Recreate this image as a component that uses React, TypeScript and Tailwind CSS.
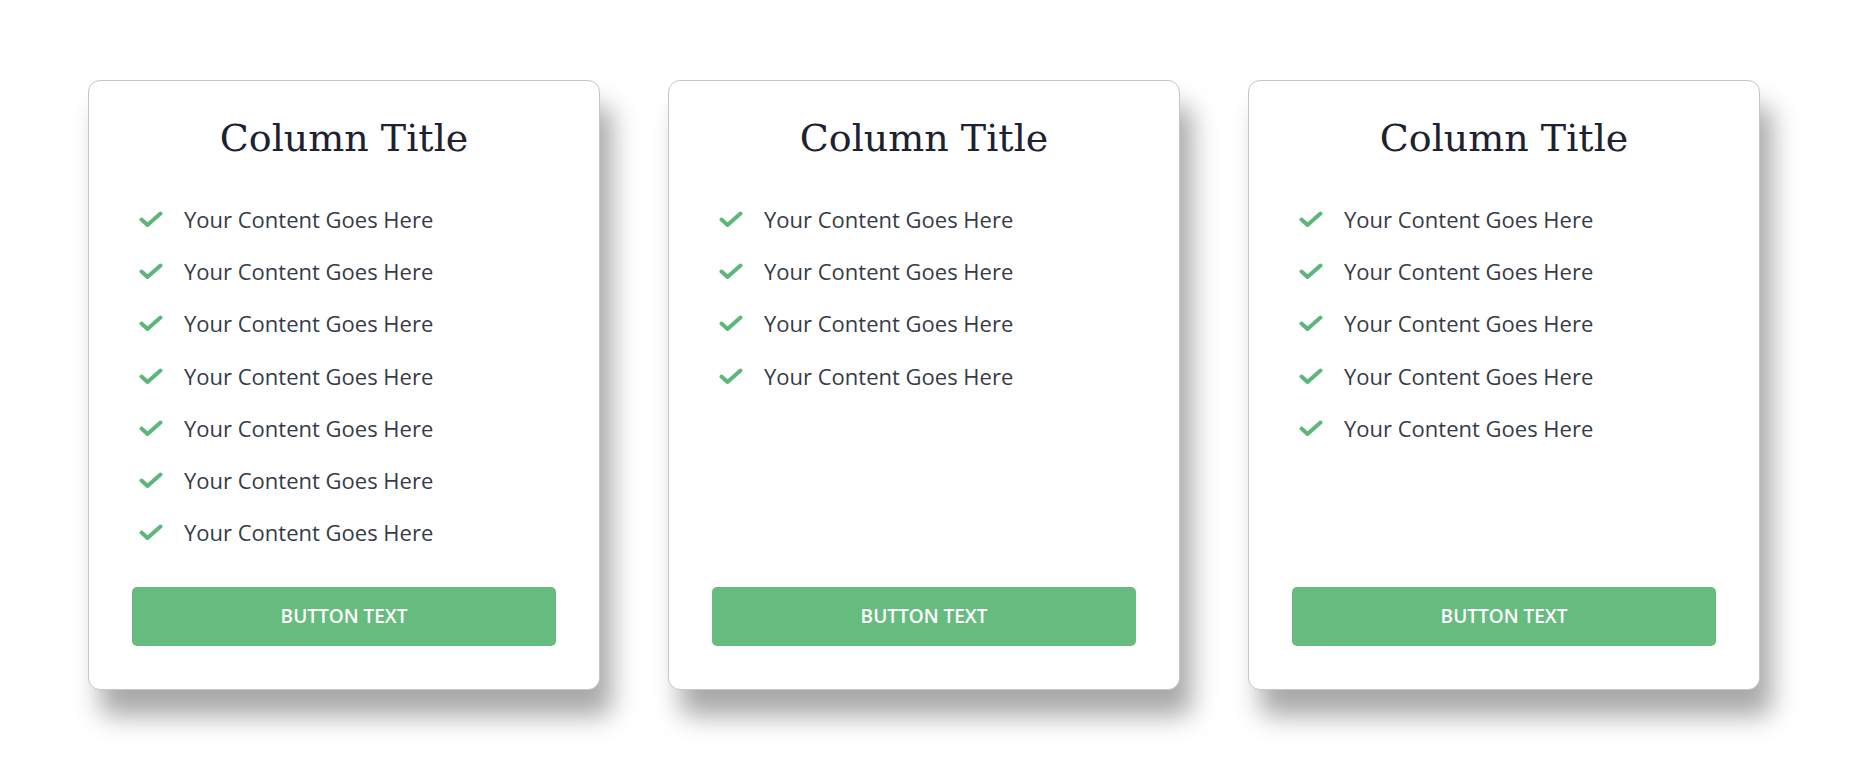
import React from "react";

const columns = [
  { title: "Column Title", items: 7 },
  { title: "Column Title", items: 4 },
  { title: "Column Title", items: 5 },
];

function CheckMark() {
  return (
    <svg viewBox="0 0 24 17" className="h-[17px] w-[24px] shrink-0" fill="none">
      <polyline
        points="2.5,8.5 8.5,14 21.5,2.5"
        stroke="#5db77a"
        strokeWidth="4"
        strokeLinecap="round"
        strokeLinejoin="round"
      />
    </svg>
  );
}

function PricingColumn({ title, items }: { title: string; items: number }) {
  return (
    <div className="flex w-[512px] flex-col rounded-[12px] border border-[#c6c6c6] bg-white px-[43px] pt-[29px] pb-[43px] shadow-[12px_26px_26px_rgba(0,0,0,0.34)]">
      <h2 className="text-center font-['DejaVu_Serif',serif] text-[38px] leading-[56px] text-[#1d2230]">
        {title}
      </h2>
      <ul className="mt-[27px] flex flex-1 flex-col pl-[7px]">
        {Array.from({ length: items }).map((_, i) => (
          <li key={i} className="flex h-[52.3px] items-center">
            <CheckMark />
            <span className="ml-[21px] font-['Open_Sans',sans-serif] text-[22px] text-[#363b48]">
              Your Content Goes Here
            </span>
          </li>
        ))}
      </ul>
      <button className="mt-[28px] h-[59px] w-full shrink-0 rounded-[5px] bg-[#66bc7e] font-['Open_Sans',sans-serif] text-[19px] font-semibold text-white">
        BUTTON TEXT
      </button>
    </div>
  );
}

export default function App() {
  return (
    <div className="flex min-h-[779px] w-full justify-center bg-white pr-[2px]">
      <div className="mt-[80px] flex h-[610px] gap-[68px]">
        {columns.map((c, i) => (
          <PricingColumn key={i} title={c.title} items={c.items} />
        ))}
      </div>
    </div>
  );
}
